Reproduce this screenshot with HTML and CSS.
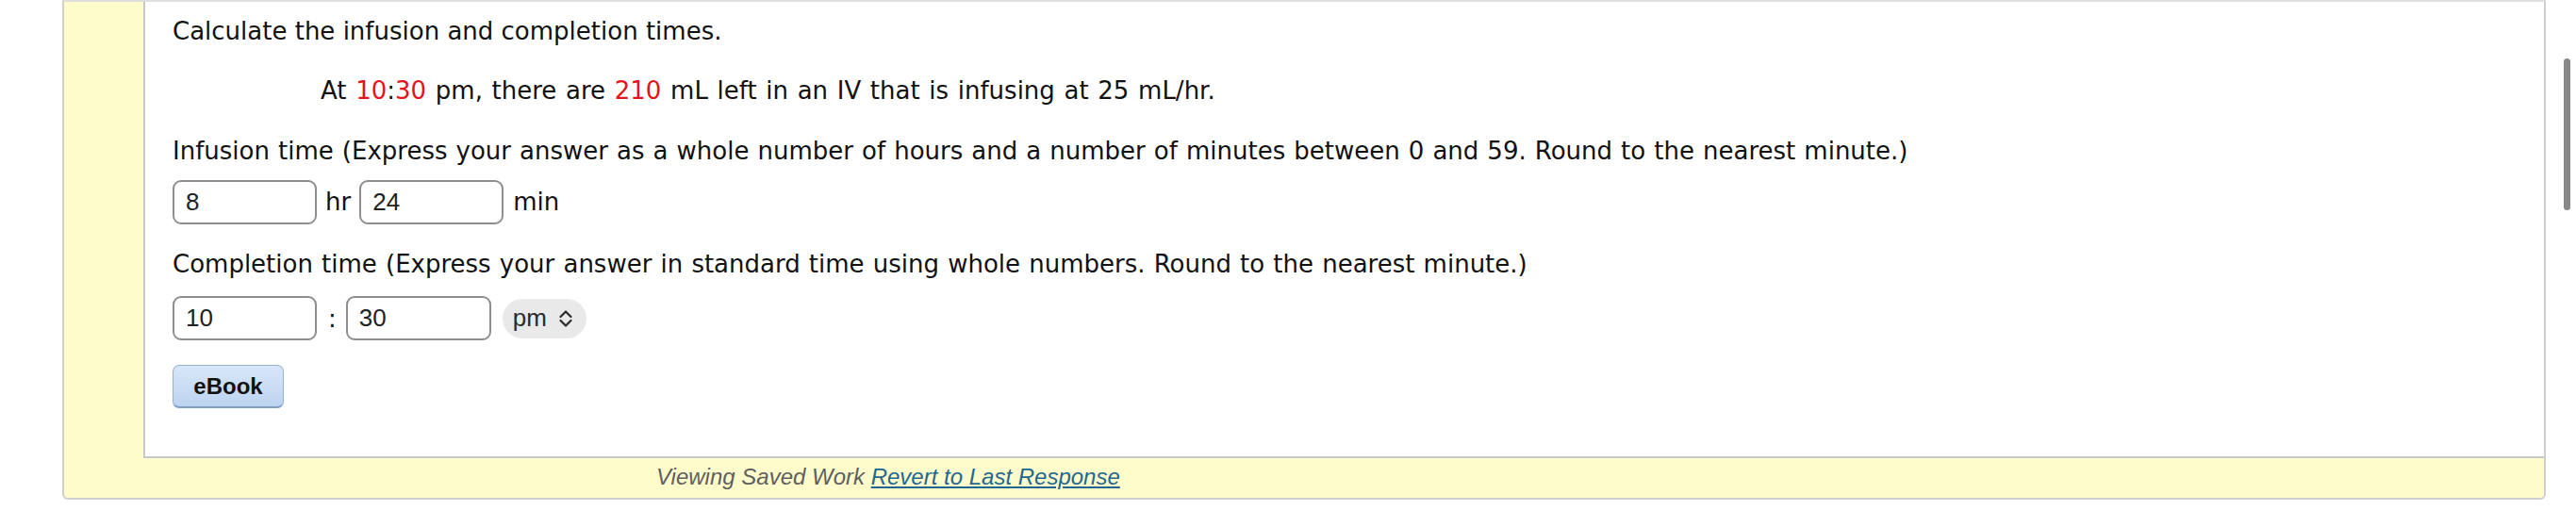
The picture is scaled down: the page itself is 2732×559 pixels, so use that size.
FILE: index.html
```html
<!DOCTYPE html>
<html lang="en">
<head>
<meta charset="utf-8">
<title>Infusion and completion times</title>
<link rel="stylesheet" href="styles.css">
</head>
<body>
<div class="panel">
  <div class="card">
    <p class="line l1">Calculate the infusion and completion times.</p>
    <p class="line l2">At <span class="red">10</span>:<span class="red">30</span> pm, there are <span class="red">210</span> mL left in an IV that is infusing at 25 mL/hr.</p>
    <p class="line l3">Infusion time (Express your answer as a whole number of hours and a number of minutes between 0 and 59. Round to the nearest minute.)</p>
    <div class="row r1">
      <input class="box" type="text" value="8" readonly>
      <span class="unit hr">hr</span>
      <input class="box" type="text" value="24" readonly>
      <span class="unit min">min</span>
    </div>
    <p class="line l4">Completion time (Express your answer in standard time using whole numbers. Round to the nearest minute.)</p>
    <div class="row r2">
      <input class="box" type="text" value="10" readonly>
      <span class="colon">:</span>
      <input class="box box-wide" type="text" value="30" readonly>
      <div class="pill">
        <span class="pill-text">pm</span>
        <svg class="updown" width="16" height="20" viewBox="0 0 16 20" aria-hidden="true">
          <path d="M2.5 8 L8 2.5 L13.5 8 M2.5 12 L8 17.5 L13.5 12" fill="none" stroke="#2a2a2a" stroke-width="2.2" stroke-linecap="round" stroke-linejoin="round"/>
        </svg>
      </div>
    </div>
    <button class="ebook" type="button">eBook</button>
  </div>
  <div class="footer"><span class="viewing">Viewing Saved Work</span> <a class="revert" href="#">Revert to Last Response</a></div>
</div>
<div class="scrollthumb"></div>
</body>
</html>
```

FILE: styles.css
```css
html, body {
  margin: 0;
  padding: 0;
  background: #ffffff;
}

body {
  font-family: "DejaVu Sans", Verdana, sans-serif;
  font-size: 26px;
  color: #111111;
  width: 2732px;
  height: 559px;
  overflow: hidden;
}

.panel {
  box-sizing: border-box;
  margin-left: 66px;
  width: 2634px;
  padding-left: 84px;
  background: #fffccc;
  border: 2px solid #cfcfcf;
  border-top-color: #dedede;
  border-radius: 0 0 6px 6px;
}

.card {
  background: #ffffff;
  border-left: 2px solid #c8c8c8;
  border-bottom: 2px solid #c8c8c8;
  padding: 15px 0 51px 29px;
}

.line {
  margin: 0;
  line-height: 32px;
  white-space: nowrap;
}

.l2 { margin-top: 31px; padding-left: 157px; word-spacing: 1.4px; }
.l3 { margin-top: 32px; word-spacing: 0.8px; }
.l4 { margin-top: 26px; word-spacing: 0.9px; }

.red { color: #e3141b; }

.row {
  display: flex;
  align-items: baseline;
}

.r1 { margin-top: 15px; }
.r2 { margin-top: 18px; align-items: center; }

.box {
  box-sizing: border-box;
  width: 153px;
  height: 47px;
  margin: 0;
  padding: 0 0 0 12px;
  border: 2px solid #8e8e8e;
  border-radius: 9px;
  background: #ffffff;
  font-family: "Liberation Sans", Arial, sans-serif;
  font-size: 26px;
  color: #222222;
  outline: none;
}

.box-wide { width: 154px; }

.unit { line-height: 32px; }
.hr { margin: 0 9px 0 9px; }
.min { margin-left: 10px; }

.colon {
  margin: 0 10px 0 12px;
  line-height: 32px;
}

.pill {
  box-sizing: border-box;
  margin-left: 12px;
  width: 89px;
  height: 42px;
  border-radius: 21px;
  background: #e9e9e9;
  display: flex;
  align-items: center;
  padding-left: 11px;
  gap: 12px;
  font-family: "Liberation Sans", Arial, sans-serif;
  font-size: 26px;
  color: #2a2a2a;
}

.updown { display: block; }

.ebook {
  display: block;
  box-sizing: border-box;
  margin: 26px 0 0 0;
  width: 118px;
  height: 46px;
  padding: 0;
  border: 1px solid #93b2d8;
  border-bottom: 2px solid #7e9ec8;
  border-radius: 7px;
  background: linear-gradient(#d8e7f8, #bcd3f0);
  font-family: "Liberation Sans", Arial, sans-serif;
  font-weight: bold;
  font-size: 24px;
  color: #111111;
  cursor: pointer;
}

.footer {
  height: 42px;
  line-height: 40px;
  padding-left: 544px;
  font-family: "Liberation Sans", Arial, sans-serif;
  font-style: italic;
  font-size: 24px;
  white-space: nowrap;
}

.viewing { color: #5f5f5f; }

.revert {
  color: #1f6790;
  text-decoration: underline;
}

.scrollthumb {
  position: absolute;
  left: 2719px;
  top: 62px;
  width: 7px;
  height: 161px;
  border-radius: 4px;
  background: #878787;
}
```
